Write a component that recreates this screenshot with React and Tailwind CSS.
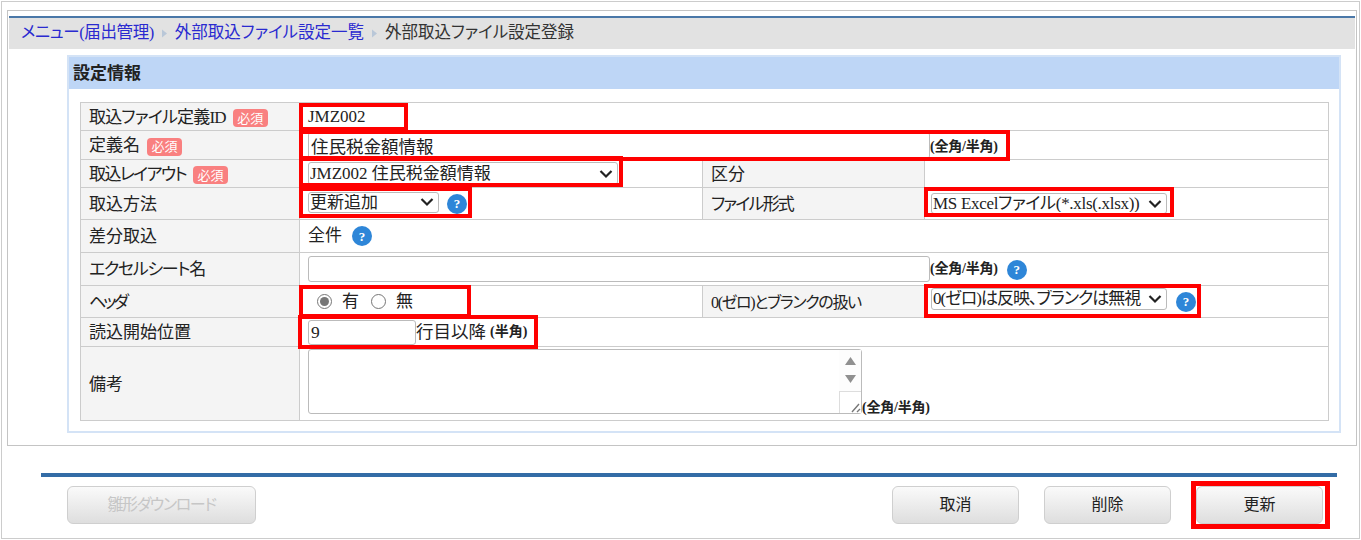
import { useState } from 'react';

function Required() {
  return (
    <span className="ml-[7px] inline-flex h-[18px] w-[35px] items-center justify-center rounded-[4px] bg-[#f98080] text-[13px] leading-none tracking-normal text-white">
      必須
    </span>
  );
}

function Help() {
  return (
    <span className="inline-flex h-[20px] w-[20px] shrink-0 items-center justify-center rounded-full bg-[#2e86d8] text-[13px] font-bold leading-none text-white">
      ?
    </span>
  );
}

function Note({ className = '' }) {
  return <span className={`text-[14px] font-bold tracking-[-0.2px] text-[#222] ${className}`}>(全角/半角)</span>;
}

function Arrow() {
  return (
    <svg width="9" height="11" viewBox="0 0 9 11" className="mx-[6px] shrink-0">
      <path d="M2 1.5 L7 5.5 L2 9.5 Z" fill="#b9c7d8" />
    </svg>
  );
}

function Label({ children, className = 'text-[17px]' }) {
  return (
    <td className={`border border-[#cccccc] bg-[#f4f4f4] pl-[8px] pt-[2px] align-middle leading-[22px] text-[#222] ${className}`}>
      {children}
    </td>
  );
}

function Cell({ children, colSpan, className = 'pl-[8px]' }) {
  return (
    <td colSpan={colSpan} className={`border border-[#cccccc] align-middle text-[17px] leading-[22px] text-[#222] ${className}`}>
      {children}
    </td>
  );
}

function Select({ children, className = '' }) {
  return (
    <div className={`relative shrink-0 ${className}`}>
      <select className="h-full w-full appearance-none rounded-[3px] border border-[#bbbbbb] bg-white pl-[1px] leading-none outline-none">
        {children}
      </select>
      <svg width="14" height="9" viewBox="0 0 14 9" className="pointer-events-none absolute right-[5px] top-1/2 -translate-y-1/2">
        <path d="M1.5 1.5 L7 7 L12.5 1.5" fill="none" stroke="#222222" strokeWidth="2.2" />
      </svg>
    </div>
  );
}

function FooterButton({ children, disabled, className = 'w-[127px]' }) {
  return (
    <button
      type="button"
      disabled={disabled}
      className={`h-[38px] rounded-[6px] border border-[#cfcfcf] bg-gradient-to-b from-[#fafafa] to-[#dedede] text-[16px] ${
        disabled ? 'text-[#c6c6c6]' : 'text-[#222]'
      } ${className}`}
    >
      {children}
    </button>
  );
}

export default function App() {
  const [header, setHeader] = useState('yes');

  return (
    <div className="relative h-[540px] w-[1361px] overflow-hidden bg-white font-['Liberation_Serif','Noto_Sans_CJK_JP',sans-serif] [font-feature-settings:'palt']">
      <div className="mx-[1px] mt-[1px] h-[538px] border border-[#cccccc] pl-[5px] pr-[2px] pt-[8px]">
        <div className="h-[436px] border border-[#c4c4c4] pt-[5px]">
          <div className="ml-[1px] mr-[1px] flex h-[33px] items-center border-t-2 border-[#4a78a8] bg-[#e2e2e2] pl-[12px] text-[16.5px]">
            <a className="tracking-[-0.4px] text-[#2a2ad0]">メニュー(届出管理)</a>
            <Arrow />
            <a className="text-[#2a2ad0]">外部取込ファイル設定一覧</a>
            <Arrow />
            <span className="text-[#333]">外部取込ファイル設定登録</span>
          </div>

          <div className="ml-[59px] mr-[15px] mt-[6px] h-[378px] border-2 border-[#d4e3f6]">
            <div className="flex h-[32px] items-center bg-[#bed6f6] pl-[4px] pt-[2px] text-[17px] font-bold text-[#222]">設定情報</div>
            <div className="pl-[11px] pr-[9px] pt-[13px]">
              <table className="w-[1248px] table-fixed border-collapse">
                <colgroup>
                  <col className="w-[219px]" />
                  <col className="w-[403px]" />
                  <col className="w-[222px]" />
                  <col className="w-[404px]" />
                </colgroup>
                <tbody>
                  <tr className="h-[28px]">
                    <Label className="text-[17px] tracking-[-0.8px]">取込ファイル定義ID<Required /></Label>
                    <Cell colSpan={3}>JMZ002</Cell>
                  </tr>
                  <tr className="h-[29px]">
                    <Label>定義名<Required /></Label>
                    <Cell colSpan={3}>
                      <div className="flex items-center">
                        <input readOnly value="住民税金額情報" className="h-[27px] w-[622px] rounded-[3px] border border-[#bbbbbb] px-[2px] text-[17.5px] outline-none" />
                        <Note className="pt-[3px]" />
                      </div>
                    </Cell>
                  </tr>
                  <tr className="h-[28px]">
                    <Label className="text-[17px] tracking-[-1.6px]">取込レイアウト<Required /></Label>
                    <Cell>
                      <Select className="h-[23px] w-[310px]">
                        <option>JMZ002 住民税金額情報</option>
                      </Select>
                    </Cell>
                    <Label>区分</Label>
                    <Cell />
                  </tr>
                  <tr className="h-[32px]">
                    <Label>取込方法</Label>
                    <Cell>
                      <div className="flex items-center gap-[8px]">
                        <Select className="mb-[3px] h-[21px] w-[131px]">
                          <option>更新追加</option>
                        </Select>
                        <Help />
                      </div>
                    </Cell>
                    <Label className="text-[17px] tracking-[-1.8px]">ファイル形式</Label>
                    <Cell className="pl-[6px]">
                      <Select className="h-[21px] w-[236px] tracking-[-0.3px]">
                        <option>MS Excelファイル(*.xls(.xlsx))</option>
                      </Select>
                    </Cell>
                  </tr>
                  <tr className="h-[33px]">
                    <Label>差分取込</Label>
                    <Cell colSpan={3}>
                      <div className="flex items-center gap-[10px]">
                        全件
                        <Help />
                      </div>
                    </Cell>
                  </tr>
                  <tr className="h-[33px]">
                    <Label className="text-[17px] tracking-[-1.3px]">エクセルシート名</Label>
                    <Cell colSpan={3}>
                      <div className="flex items-center">
                        <input readOnly className="h-[26px] w-[622px] rounded-[3px] border border-[#bbbbbb] outline-none" />
                        <Note />
                        <span className="ml-[9px]"><Help /></span>
                      </div>
                    </Cell>
                  </tr>
                  <tr className="h-[32px]">
                    <Label className="text-[17px] tracking-[-3px]">ヘッダ</Label>
                    <Cell>
                      <div className="flex items-center pl-[9px]">
                        <input
                          type="radio"
                          name="header"
                          checked={header === 'yes'}
                          onChange={() => setHeader('yes')}
                          className="h-[15px] w-[15px] accent-[#777777]"
                        />
                        <span className="ml-[10px]">有</span>
                        <input
                          type="radio"
                          name="header"
                          checked={header === 'no'}
                          onChange={() => setHeader('no')}
                          className="ml-[12px] h-[15px] w-[15px] accent-[#777777]"
                        />
                        <span className="ml-[10px]">無</span>
                      </div>
                    </Cell>
                    <Label className="text-[16px] tracking-[-1.3px]">0(ゼロ)とブランクの扱い</Label>
                    <Cell className="pl-[6px]">
                      <div className="flex items-center gap-[9px]">
                        <Select className="mb-[6px] h-[22px] w-[236px] tracking-[-1px]">
                          <option>0(ゼロ)は反映、ブランクは無視</option>
                        </Select>
                        <Help />
                      </div>
                    </Cell>
                  </tr>
                  <tr className="h-[29px]">
                    <Label>読込開始位置</Label>
                    <Cell colSpan={3}>
                      <div className="flex items-center">
                        <input readOnly value="9" className="h-[25px] w-[108px] rounded-[3px] border border-[#bbbbbb] px-[2px] text-[17.5px] outline-none" />
                        <span className="text-[17.5px]">行目以降</span>
                        <span className="ml-[4px] text-[14px] font-bold">(半角)</span>
                      </div>
                    </Cell>
                  </tr>
                  <tr className="h-[74px]">
                    <Label>備考</Label>
                    <Cell colSpan={3}>
                      <div className="mb-[5px] flex items-end">
                        <div className="relative h-[65px] w-[554px]">
                          <textarea readOnly className="block h-full w-full resize-none rounded-[3px] border border-[#bbbbbb] outline-none" />
                          <div className="absolute bottom-[1px] right-[1px] top-[1px] flex w-[22px] flex-col items-center bg-[#fdfdfd] pt-[7px]">
                            <svg width="11" height="26" viewBox="0 0 11 26">
                              <path d="M5.5 0 L11 8 H0 Z M0 18 H11 L5.5 26 Z" fill="#909090" />
                            </svg>
                            <div className="absolute bottom-0 right-0 flex h-[22px] w-[22px] items-end justify-end border-l border-t border-[#dddddd] bg-white">
                              <svg width="12" height="12" viewBox="0 0 12 12">
                                <path d="M3 11 L10 3 M8 11 L11 8" stroke="#777777" strokeWidth="1.4" />
                              </svg>
                            </div>
                          </div>
                        </div>
                        <Note className="-mb-[5px]" />
                      </div>
                    </Cell>
                  </tr>
                </tbody>
              </table>
            </div>
          </div>
        </div>

        <div className="ml-[34px] mr-[20px] mt-[27px] border-t-4 border-[#336ca6] pl-[26px] pr-[14px] pt-[9px]">
          <div className="flex items-start justify-between">
            <FooterButton disabled className="w-[189px] tracking-[-1.4px]">雛形ダウンロード</FooterButton>
            <div className="flex gap-[25px]">
              <FooterButton>取消</FooterButton>
              <FooterButton>削除</FooterButton>
              <FooterButton>更新</FooterButton>
            </div>
          </div>
        </div>
      </div>

      {/* 赤枠の注釈 */}
      <div className="pointer-events-none absolute left-[299px] top-[103px] h-[28px] w-[109px] border-[4px] border-[#ff0000]" />
      <div className="pointer-events-none absolute left-[299px] top-[130px] h-[31px] w-[711px] border-[4px] border-[#ff0000]" />
      <div className="pointer-events-none absolute left-[299px] top-[156px] h-[31px] w-[324px] border-[4px] border-[#ff0000]" />
      <div className="pointer-events-none absolute left-[299px] top-[187px] h-[31px] w-[173px] border-[4px] border-[#ff0000]" />
      <div className="pointer-events-none absolute left-[924px] top-[187px] h-[30px] w-[250px] border-[4px] border-[#ff0000]" />
      <div className="pointer-events-none absolute left-[299px] top-[285px] h-[33px] w-[172px] border-[4px] border-[#ff0000]" />
      <div className="pointer-events-none absolute left-[924px] top-[284px] h-[34px] w-[277px] border-[4px] border-[#ff0000]" />
      <div className="pointer-events-none absolute left-[298px] top-[315px] h-[34px] w-[240px] border-[4px] border-[#ff0000]" />
      <div className="pointer-events-none absolute left-[1191px] top-[481px] h-[48px] w-[139px] border-[5px] border-[#ff0000]" />
    </div>
  );
}
